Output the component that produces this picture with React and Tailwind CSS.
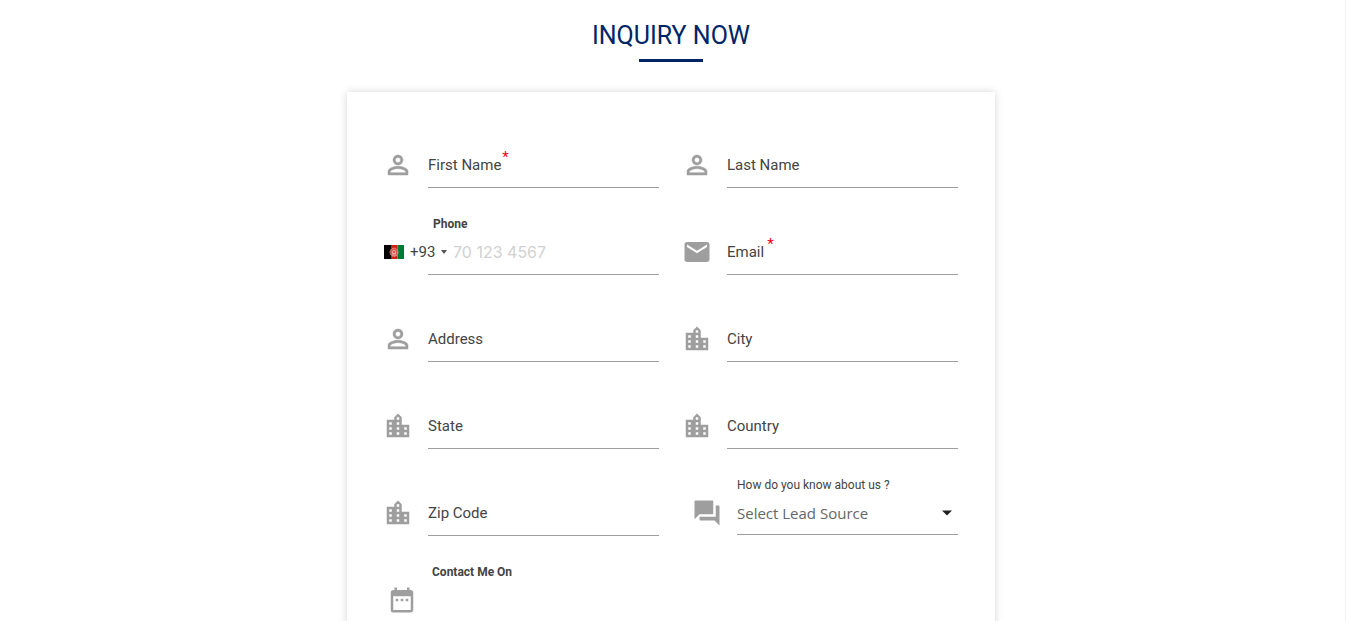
import React from "react";
import { MdEmail, MdLocationCity, MdQuestionAnswer, MdDateRange } from "react-icons/md";

const inputClass =
  "block h-[46px] w-full border-b border-[#9e9e9e] bg-transparent text-[15px] text-[#444] outline-none";

function PersonIcon(props) {
  return (
    <svg viewBox="0 0 24 24" fill="currentColor" stroke="currentColor" strokeWidth="0.4" {...props}>
      <path d="M12 5.9c1.160 0 2.100.94 2.100 2.100s-.94 2.100-2.100 2.100S9.900 9.160 9.900 8s.94-2.100 2.100-2.100m0 9c2.970 0 6.100 1.460 6.100 2.100v1.100H5.900V17c0-.64 3.130-2.100 6.100-2.100M12 4C9.790 4 8 5.790 8 8s1.790 4 4 4 4-1.790 4-4-1.790-4-4-4zm0 9c-2.670 0-8 1.340-8 4v3h16v-3c0-2.660-5.330-4-8-4z" />
    </svg>
  );
}

function Field({ id, label, icon: Icon, required, spaced, type = "text" }) {
  return (
    <div className="flex items-center gap-[15px] pt-[41px]">
      <Icon className="size-[30px] shrink-0 text-[#9e9e9e]" aria-hidden="true" />
      <div className="relative min-w-0 flex-1">
        <input id={id} type={type} required={required} placeholder=" " className={"peer " + inputClass} />
        <label
          htmlFor={id}
          className="pointer-events-none absolute inset-y-0 left-0 hidden items-center text-[15px] text-[#444] peer-placeholder-shown:flex"
        >
          {label}
          {required && (
            <span className={spaced ? "ml-[3px] pb-4 text-[#ff0018]" : "ml-px pb-4 text-[#ff0018]"}>*</span>
          )}
        </label>
      </div>
    </div>
  );
}

function Flag() {
  return (
    <svg width="20" height="14" viewBox="0 0 20 14" aria-hidden="true">
      <path fill="#000" d="M0 0h7v14H0z" />
      <path fill="#d32011" d="M7 0h6.500v14H7z" />
      <path fill="#007a36" d="M13.500 0H20v14h-6.500z" />
      <ellipse cx="10" cy="7.300" rx="3.800" ry="4" fill="#e0564b" />
      <ellipse cx="10" cy="7.300" rx="4" ry="4.200" fill="none" stroke="#e8a09a" strokeWidth="1" strokeDasharray="1.600 .8" />
      <path d="M8.500 8.500V6.500L10 5l1.500 1.500v2zM8 10h4" fill="none" stroke="#f2c0bb" strokeWidth=".8" />
    </svg>
  );
}

function PhoneField() {
  return (
    <div>
      <div className="flex h-[41px] items-end pl-[50px]">
        <label htmlFor="phone" className="text-[12px] leading-[10px] font-bold text-[#444]">
          Phone
        </label>
      </div>
      <div className="relative pl-[45px]">
        <input
          id="phone"
          type="tel"
          placeholder="70 123 4567"
          className="block h-[46px] w-full border-b border-[#9e9e9e] bg-transparent pl-[25px] font-[Inter,sans-serif] text-[16px] text-[#444] outline-none placeholder:text-[#d1d1d1]"
        />
        <button
          type="button"
          aria-label="Select country code"
          className="absolute inset-y-0 left-px flex items-center gap-[6px] text-[15px] text-[#444]"
        >
          <Flag />
          <span>+93</span>
          <svg width="6" height="4" viewBox="0 0 6 4" aria-hidden="true">
            <path d="M0 0h6L3 4z" fill="#555" />
          </svg>
        </button>
      </div>
    </div>
  );
}

function LeadSourceField() {
  return (
    <div className="pl-[10px]">
      <div className="flex h-[41px] items-end pl-[45px]">
        <label htmlFor="lead" className="text-[12px] leading-[10px] text-[#444]">
          How do you know about us ?
        </label>
      </div>
      <div className="flex items-start gap-[15px]">
        <MdQuestionAnswer className="mt-2 size-[30px] shrink-0 text-[#9e9e9e]" aria-hidden="true" />
        <div className="relative min-w-0 flex-1">
          <select
            id="lead"
            className="block h-[45px] w-full appearance-none border-b border-[#9e9e9e] bg-transparent pt-[2px] font-['Open_Sans',sans-serif] text-[15px] text-[#666] outline-none"
          >
            <option>Select Lead Source</option>
          </select>
          <svg
            className="pointer-events-none absolute top-5 right-[6px]"
            width="10"
            height="6"
            viewBox="0 0 10 6"
            aria-hidden="true"
          >
            <path d="M0 .5h10l-5 5z" fill="#212121" />
          </svg>
        </div>
      </div>
    </div>
  );
}

function ContactField() {
  return (
    <div className="pl-1">
      <div className="flex h-[41px] items-end pl-[45px]">
        <label htmlFor="contact" className="text-[12px] leading-[10px] font-bold text-[#444]">
          Contact Me On
        </label>
      </div>
      <div className="flex items-center gap-[15px]">
        <MdDateRange className="size-[30px] shrink-0 text-[#9e9e9e]" aria-hidden="true" />
        <input id="contact" type="text" className={inputClass} />
      </div>
    </div>
  );
}

export default function App() {
  return (
    <main className="h-screen overflow-hidden border-r border-[#f0f0f0] bg-white pt-4 pr-[3px] font-[Roboto,sans-serif]">
      <h1 className="text-center text-[25px] leading-10 text-[#002566]">INQUIRY NOW</h1>
      <div className="mx-auto mt-[3px] h-[3px] w-16 bg-[#002566]" />
      <form className="mx-auto mt-[30px] max-w-[648px] bg-white pt-[9px] pr-[37px] pb-9 pl-9 shadow-[0_0_8px_rgba(0,0,0,0.16)]">
        <div className="grid grid-cols-2 gap-x-[23px]">
          <Field id="first" label="First Name" icon={PersonIcon} required />
          <Field id="last" label="Last Name" icon={PersonIcon} />
          <PhoneField />
          <Field id="email" type="email" label="Email" icon={MdEmail} required spaced />
          <Field id="address" label="Address" icon={PersonIcon} />
          <Field id="city" label="City" icon={MdLocationCity} />
          <Field id="state" label="State" icon={MdLocationCity} />
          <Field id="country" label="Country" icon={MdLocationCity} />
          <Field id="zip" label="Zip Code" icon={MdLocationCity} />
          <LeadSourceField />
          <ContactField />
        </div>
      </form>
    </main>
  );
}
